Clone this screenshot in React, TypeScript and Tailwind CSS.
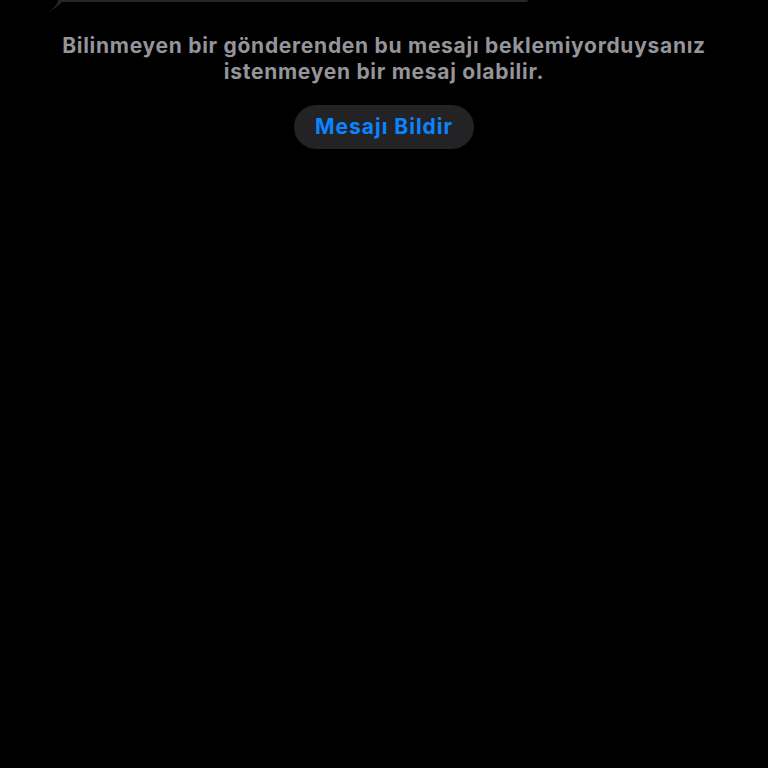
import React from 'react';

export default function App() {
  return (
    <div className="w-[768px] h-[768px] bg-black overflow-hidden flex flex-col items-center" style={{ fontFamily: 'Inter, "Noto Sans", sans-serif' }}>
      {/* önceki mesaj balonunun alt kenarı */}
      <div className="w-full h-[14px] relative">
        <svg width="768" height="14" viewBox="0 0 768 14" className="absolute left-0 top-0">
          <path d="M46 14 C52 10 56 6 58 2 L58 -20 L528 -20 L528 0 Q528 2 524 2 L62 2 Q56 8 46 14 Z" fill="#262628" />
        </svg>
      </div>
      <p className="mt-[19px] text-center text-[21px] leading-[26px] font-bold text-[#949499] tracking-[0.72px] whitespace-nowrap">
        Bilinmeyen bir gönderenden bu mesajı beklemiyorduysanız
        <br />
        istenmeyen bir mesaj olabilir.
      </p>
      <button className="mt-[20px] w-[180px] h-[44px] rounded-full bg-[#232325] text-[#0a84ff] text-[21px] font-bold tracking-[1px]">
        Mesajı Bildir
      </button>
    </div>
  );
}
